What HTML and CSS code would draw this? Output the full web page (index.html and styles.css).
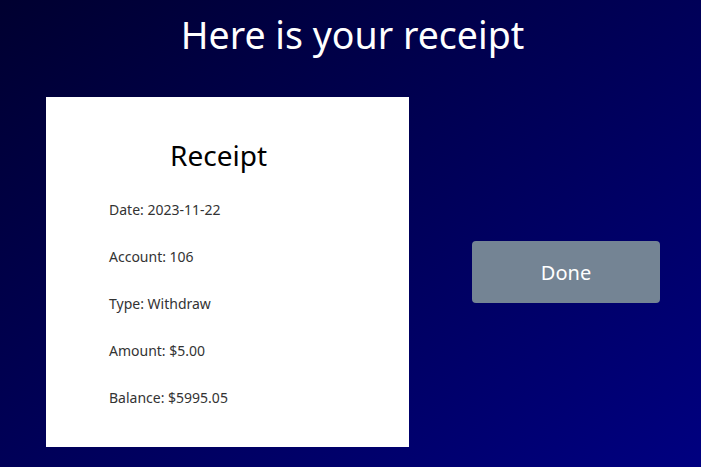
FILE: index.html
```html
<!DOCTYPE html>
<html>
<head>
<meta charset="utf-8">
<link rel="stylesheet" href="styles.css">
</head>
<body>
<h1 class="title">Here is your receipt</h1>
<div class="row">
  <div class="card">
    <h2 class="card-title">Receipt</h2>
    <div class="items">
      <p class="item">Date: 2023-11-22</p>
      <p class="item">Account: 106</p>
      <p class="item">Type: Withdraw</p>
      <p class="item">Amount: $5.00</p>
      <p class="item">Balance: $5995.05</p>
    </div>
  </div>
  <button class="done">Done</button>
</div>
</body>
</html>
```
FILE: styles.css
```css
html, body {
  margin: 0;
  padding: 0;
  height: 100%;
}
body {
  background: linear-gradient(to bottom right, #000030, #000080);
  font-family: "Noto Sans", "Open Sans", sans-serif;
  overflow: hidden;
}
.title {
  margin: 0;
  padding-top: 12px;
  padding-left: 4px;
  height: 97px;
  box-sizing: border-box;
  text-align: center;
  color: #fff;
  font-weight: 400;
  font-size: 37.5px;
  line-height: 46px;
}
.row {
  display: flex;
  align-items: center;
  padding-left: 46px;
  gap: 63px;
}
.card {
  width: 363px;
  height: 350px;
  background: #fff;
  box-sizing: border-box;
  padding-top: 38px;
}
.card-title {
  margin: 0;
  width: 345px;
  text-align: center;
  font-weight: 400;
  font-size: 28px;
  line-height: 40px;
  color: #000;
}
.items {
  padding-left: 63px;
  padding-top: 25px;
}
.item {
  margin: 0;
  height: 47px;
  line-height: 20px;
  font-size: 14px;
  color: #333;
}
.done {
  width: 188px;
  height: 62px;
  border: none;
  border-radius: 4px;
  background: #748494;
  color: #fff;
  font-family: "Noto Sans", "Open Sans", sans-serif;
  font-size: 20px;
}
```
